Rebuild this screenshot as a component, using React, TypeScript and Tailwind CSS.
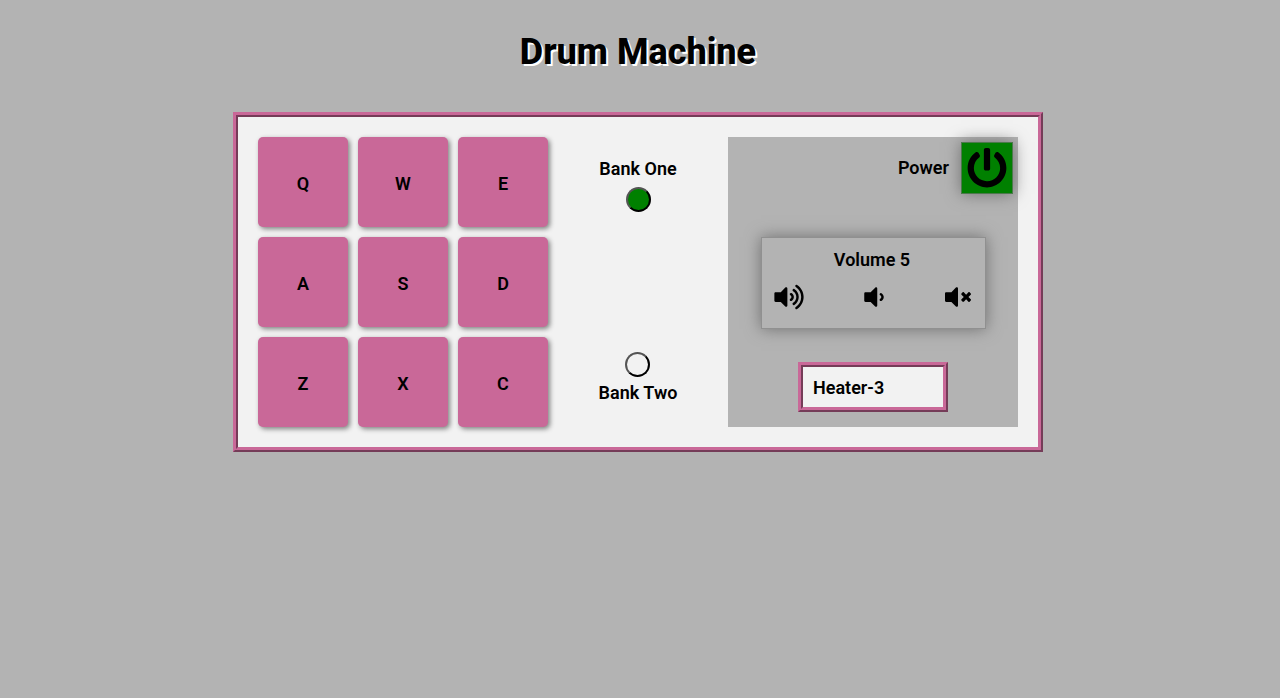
import { useState } from "react";
import { FaPowerOff, FaVolumeDown, FaVolumeMute, FaVolumeUp } from "react-icons/fa";

const PADS = ["Q", "W", "E", "A", "S", "D", "Z", "X", "C"];
const SOUNDS: Record<string, string> = {
  Q: "Heater-1",
  W: "Heater-2",
  E: "Heater-3",
  A: "Heater-4",
  S: "Clap",
  D: "Open-HH",
  Z: "Kick-n'-Hat",
  X: "Kick",
  C: "Closed-HH",
};

const RADIO =
  "size-[25px] appearance-none rounded-full border-2 border-black [border-style:outset] checked:bg-[#008000]";

export default function App() {
  const [power, setPower] = useState(true);
  const [bank, setBank] = useState(1);
  const [volume, setVolume] = useState(5);
  const [display, setDisplay] = useState("Heater-3");

  return (
    <div className="flex min-h-screen flex-col items-center bg-[#b3b3b3] pr-1 font-['Roboto',sans-serif] text-lg/6 font-semibold text-black">
      <h1 className="pt-7 text-4xl/12 font-extrabold [text-shadow:2px_2px_0_white]">Drum Machine</h1>

      <main className="mt-9 flex border-5 border-[#c96898] bg-[#f2f2f2] p-5 [border-style:ridge]">
        <div className="grid grid-cols-3 gap-2.5">
          {PADS.map((pad) => (
            <button
              key={pad}
              className="size-[90px] rounded-[5px] bg-[#c96898] pt-1 shadow-[2px_2px_5px_#808080]"
              onClick={() => power && setDisplay(SOUNDS[pad])}
            >
              {pad}
            </button>
          ))}
        </div>

        <div className="flex w-[180px] flex-col items-center justify-between pt-5 pb-[22px]">
          <label className="flex flex-col items-center gap-1.5">
            Bank One
            <input type="radio" name="bank" className={RADIO} checked={bank === 1} onChange={() => setBank(1)} />
          </label>
          <label className="flex flex-col items-center gap-1">
            <input type="radio" name="bank" className={RADIO} checked={bank === 2} onChange={() => setBank(2)} />
            Bank Two
          </label>
        </div>

        <section className="flex w-[290px] flex-col items-center bg-[#b3b3b3] pt-[5px] pb-[15px]">
          <div className="flex items-center gap-3 self-end pr-[5px]">
            <span id="power-label">Power</span>
            <button
              aria-labelledby="power-label"
              aria-pressed={power}
              className="flex size-[52px] items-center justify-center border border-[#4c794c] bg-[#b3b3b3] shadow-[0_0_15px_#707070] aria-pressed:bg-[#008000]"
              onClick={() => setPower(!power)}
            >
              <FaPowerOff size={40} />
            </button>
          </div>

          <div className="mt-[43px] flex h-[92px] w-[225px] flex-col gap-3 border border-[#909090] pt-2.5 pr-3.5 pl-3 shadow-[0_0_15px_#707070]">
            <p className="text-center">Volume {volume}</p>
            <div className="flex justify-between">
              <button aria-label="Volume up" onClick={() => setVolume(Math.min(10, volume + 1))}>
                <FaVolumeUp className="h-[26px] w-[30px]" />
              </button>
              <button aria-label="Volume down" onClick={() => setVolume(Math.max(0, volume - 1))}>
                <FaVolumeDown className="h-[26px] w-5" />
              </button>
              <button aria-label="Mute" onClick={() => setVolume(0)}>
                <FaVolumeMute size={26} />
              </button>
            </div>
          </div>

          <input
            aria-label="Current sound"
            readOnly
            value={display}
            className="mt-auto h-[50px] w-[150px] border-5 border-[#c96898] bg-[#f2f2f2] px-2.5 [border-style:ridge]"
          />
        </section>
      </main>
    </div>
  );
}
